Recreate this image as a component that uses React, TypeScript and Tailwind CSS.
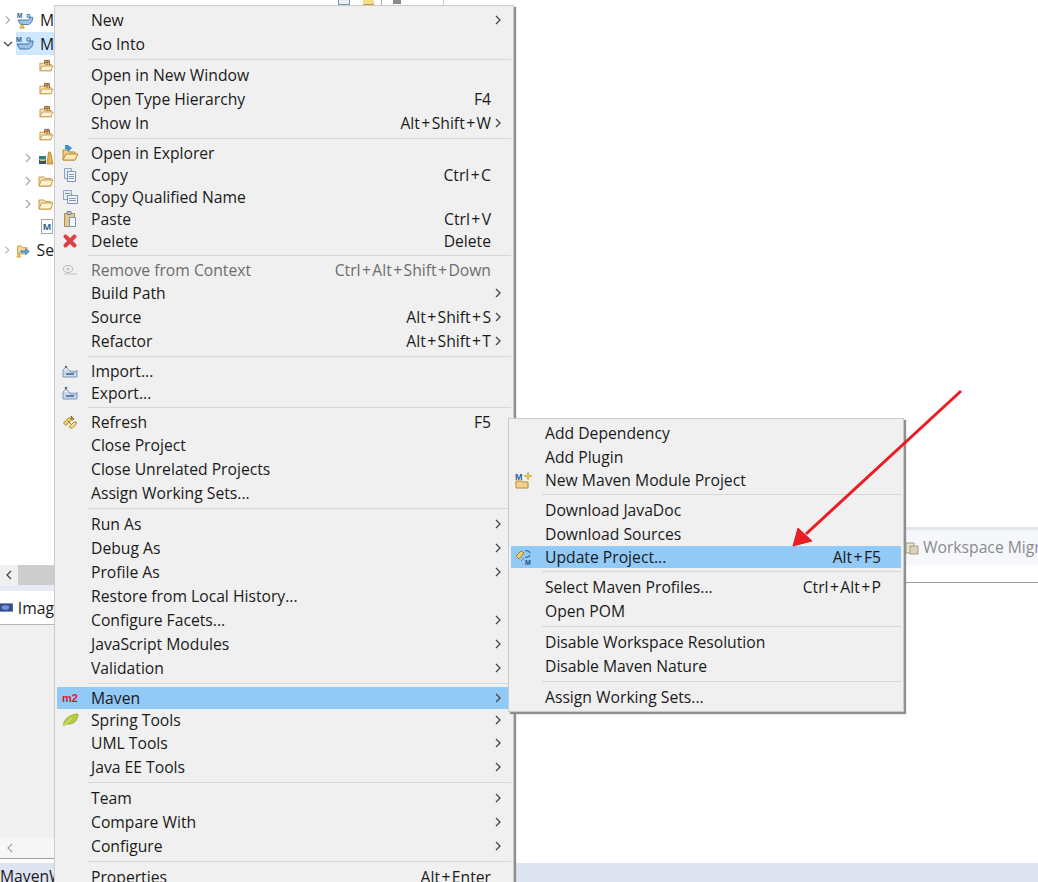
type Row = { label?: string; short?: string; arrow?: boolean; icon?: string; h?: number; sep?: boolean; off?: boolean; on?: boolean };

const mainRows: Row[] = [
  { label: 'New', arrow: true },
  { label: 'Go Into' },
  { sep: true },
  { label: 'Open in New Window' },
  { label: 'Open Type Hierarchy', short: 'F4' },
  { label: 'Show In', short: 'Alt+Shift+W', arrow: true },
  { sep: true },
  { label: 'Open in Explorer', icon: 'explorer', h: 22 },
  { label: 'Copy', short: 'Ctrl+C', icon: 'copy', h: 22 },
  { label: 'Copy Qualified Name', icon: 'copyq', h: 22 },
  { label: 'Paste', short: 'Ctrl+V', icon: 'paste', h: 22 },
  { label: 'Delete', short: 'Delete', icon: 'delete', h: 22 },
  { sep: true },
  { label: 'Remove from Context', short: 'Ctrl+Alt+Shift+Down', icon: 'remove', h: 22, off: true },
  { label: 'Build Path', arrow: true },
  { label: 'Source', short: 'Alt+Shift+S', arrow: true },
  { label: 'Refactor', short: 'Alt+Shift+T', arrow: true },
  { sep: true },
  { label: 'Import...', icon: 'import', h: 22 },
  { label: 'Export...', icon: 'export', h: 22 },
  { sep: true },
  { label: 'Refresh', short: 'F5', icon: 'refresh', h: 22 },
  { label: 'Close Project' },
  { label: 'Close Unrelated Projects' },
  { label: 'Assign Working Sets...' },
  { sep: true },
  { label: 'Run As', arrow: true },
  { label: 'Debug As', arrow: true },
  { label: 'Profile As', arrow: true },
  { label: 'Restore from Local History...' },
  { label: 'Configure Facets...', arrow: true },
  { label: 'JavaScript Modules', arrow: true },
  { label: 'Validation', arrow: true },
  { sep: true },
  { label: 'Maven', arrow: true, icon: 'm2', h: 22, on: true },
  { label: 'Spring Tools', arrow: true, icon: 'leaf', h: 22 },
  { label: 'UML Tools', arrow: true },
  { label: 'Java EE Tools', arrow: true },
  { sep: true },
  { label: 'Team', arrow: true },
  { label: 'Compare With', arrow: true },
  { label: 'Configure', arrow: true },
  { sep: true },
  { label: 'Properties', short: 'Alt+Enter' },
];

const subRows: Row[] = [
  { label: 'Add Dependency' },
  { label: 'Add Plugin' },
  { label: 'New Maven Module Project', icon: 'module', h: 22 },
  { sep: true },
  { label: 'Download JavaDoc' },
  { label: 'Download Sources' },
  { label: 'Update Project...', short: 'Alt+F5', icon: 'update', h: 22, on: true },
  { sep: true },
  { label: 'Select Maven Profiles...', short: 'Ctrl+Alt+P' },
  { label: 'Open POM' },
  { sep: true },
  { label: 'Disable Workspace Resolution' },
  { label: 'Disable Maven Nature' },
  { sep: true },
  { label: 'Assign Working Sets...' },
];

function Folder() {
  return (
    <svg width="16" height="14" viewBox="0 0 16 14">
      <path d="M1 3h5l1 1.5h6V12H1z" fill="#f7e3b5" stroke="#c89a4a" />
      <path d="M1 12l2.5-6H15l-2.5 6z" fill="#fdf3d8" stroke="#c89a4a" />
    </svg>
  );
}

function Pkg() {
  return (
    <svg width="16" height="14" viewBox="0 0 16 14">
      <path d="M1 4h5l1 1.5h6V12H1z" fill="#f7e3b5" stroke="#c89a4a" />
      <path d="M1 12l2.5-5H15l-2.5 5z" fill="#fdf3d8" stroke="#c89a4a" />
      <path d="M6 5V1h5v5M8.5 1v5M6 3h5" fill="#f4d7a0" stroke="#8a5a2b" />
    </svg>
  );
}

function Books() {
  return (
    <svg width="16" height="14" viewBox="0 0 16 14">
      <path d="M1 5h7v3H1z" fill="#2d7f7a" />
      <path d="M1 8.5h7V13H1z" fill="#35566b" />
      <path d="M2 9.5h5" stroke="#d9c36a" />
      <path d="M9 13l1.5-12 2 0L15 13z" fill="#e5b24d" stroke="#a87a24" strokeWidth="0.7" />
    </svg>
  );
}

function Project({ warn }: { warn?: boolean }) {
  return (
    <svg width="18" height="18" viewBox="0 0 18 18">
      <path d="M1 9h10c2 0 3-1 3-3h3c0 5-2 8-6 8H4z" fill="#9cc3e6" stroke="#3f74a8" />
      <path d="M11 3h3v3h-3z" fill="#cfe3f4" stroke="#3f74a8" />
      <text x="0" y="7" fontSize="7" fontWeight="700" fill="#2f5f92" fontFamily="'Liberation Sans', sans-serif">M</text>
      {warn ? <path d="M3 18l2.5-5 2.5 5z" fill="#f3c93c" stroke="#a67d12" strokeWidth="0.6" /> : null}
    </svg>
  );
}

function ServerFolder() {
  return (
    <svg width="18" height="18" viewBox="0 0 18 18">
      <path d="M2 4h5l1 2h6v8H2z" fill="#f5d99a" stroke="#c2933e" />
      <path d="M6 10h6V7l5 4-5 4v-3H6z" fill="#5aa0dc" stroke="#2f6fa8" strokeWidth="0.6" />
      <path d="M1 18l2.5-5 2.5 5z" fill="#f3c93c" stroke="#a67d12" strokeWidth="0.6" />
    </svg>
  );
}

function Chevron({ dark, dir = 'right' }: { dark?: boolean; dir?: 'right' | 'down' | 'left' }) {
  const turn = dir === 'down' ? 'rotate-90' : dir === 'left' ? 'rotate-180' : '';
  return (
    <svg width="8" height="10" viewBox="0 0 8 10" className={turn}>
      <path d="M2 1l4 4-4 4" fill="none" stroke={dark ? '#444444' : '#a8a8a8'} strokeWidth="1.3" />
    </svg>
  );
}

function MenuIcon({ name }: { name?: string }) {
  if (name === 'explorer')
    return (
      <svg width="18" height="18" viewBox="0 0 18 18">
        <path d="M2 6h5l1 2h6v8H2z" fill="#f2cf80" stroke="#b98a36" />
        <path d="M2 16l3-6h12l-3 6z" fill="#fbe8b4" stroke="#b98a36" />
        <path d="M4 1l3 0 4 3 -4 4 0-2-3-1z" fill="#3f8fd8" />
      </svg>
    );
  if (name === 'copy')
    return (
      <svg width="16" height="16" viewBox="0 0 16 16">
        <path d="M2.5 1.5h7v10h-7z" fill="#e6edf5" stroke="#8ea4bd" />
        <path d="M5.5 4.5h8v10h-8z" fill="#f4f7fb" stroke="#7d95b0" />
        <path d="M7 7.5h5M7 9.5h5M7 11.5h5" stroke="#7d95b0" />
      </svg>
    );
  if (name === 'copyq')
    return (
      <svg width="16" height="16" viewBox="0 0 16 16">
        <path d="M1.5 1.5h8v9h-8z" fill="#e6edf5" stroke="#8ea4bd" />
        <path d="M5.5 6.5h10v8h-10z" fill="#f4f7fb" stroke="#7d95b0" />
        <path d="M3 4.5h5M7 9.5h7M7 11.5h7" stroke="#7d95b0" />
      </svg>
    );
  if (name === 'paste')
    return (
      <svg width="16" height="16" viewBox="0 0 16 16">
        <path d="M2.5 2.5h10v13h-10z" fill="#e3c893" stroke="#a98c58" />
        <path d="M5 0.5h4v3H5z" fill="#b9bfc8" stroke="#7f8791" />
        <path d="M7.5 6.5h6v9h-6z" fill="#f4f7fb" stroke="#7d95b0" />
      </svg>
    );
  if (name === 'delete')
    return (
      <svg width="16" height="16" viewBox="0 0 16 16">
        <path d="M3.5 3.5l9 9M12.5 3.5l-9 9" stroke="#dc4146" strokeWidth="4" strokeLinecap="round" />
      </svg>
    );
  if (name === 'remove')
    return (
      <svg width="16" height="14" viewBox="0 0 16 14">
        <ellipse cx="6" cy="6" rx="4.5" ry="3.5" fill="none" stroke="#b8b8b8" />
        <circle cx="6" cy="6" r="1.5" fill="#c4c4c4" />
        <path d="M2 11h13" stroke="#c4c4c4" />
      </svg>
    );
  if (name === 'import' || name === 'export')
    return (
      <svg width="16" height="14" viewBox="0 0 16 14">
        <path d="M1 6v7h14V6" fill="#c9d8ea" stroke="#7b98b9" />
        <path d="M1 6l3-3 5 5h6" fill="none" stroke="#7b98b9" />
        <path d="M4 9h8v2H4z" fill="#5f7fa6" />
        <circle cx="4" cy={name === 'import' ? 3 : 2} r="1.3" fill="#5f6f88" />
      </svg>
    );
  if (name === 'refresh')
    return (
      <svg width="16" height="16" viewBox="0 0 16 16">
        <path d="M1.5 9l5-5 2.5 0 0 2.5-5 5z" fill="#f3cb6a" stroke="#b48a2c" />
        <path d="M7 13l5-5 2.5 0-1 3-3.5 3.5z" fill="#f7dc90" stroke="#b48a2c" />
        <path d="M6 7l3 3M9 2l3 3-2 1z" stroke="#8a6a20" fill="#f3cb6a" />
      </svg>
    );
  if (name === 'm2')
    return (
      <span className="text-[11px] leading-none font-bold text-[#e3122d] font-['Liberation_Sans',sans-serif]">m2</span>
    );
  if (name === 'leaf')
    return (
      <svg width="17" height="14" viewBox="0 0 17 14">
        <path d="M1 13C2 6 8 1 16 1c0 7-5 11-11 10z" fill="#b4cd42" stroke="#8aa52a" strokeWidth="0.7" />
        <path d="M1 13L10 5" stroke="#e3ec9a" />
      </svg>
    );
  if (name === 'module')
    return (
      <svg width="18" height="18" viewBox="0 0 18 18">
        <path d="M1 10h6l1 1h5v6H1z" fill="#f2d28a" stroke="#b98a36" />
        <text x="0" y="9" fontSize="9" fontWeight="700" fill="#2f5f92" fontFamily="'Liberation Sans', sans-serif">M</text>
        <path d="M13 1l1 3 3 1-3 1-1 3-1-3-3-1 3-1z" fill="#f0c94e" stroke="#b4902a" strokeWidth="0.5" />
      </svg>
    );
  if (name === 'update')
    return (
      <svg width="18" height="18" viewBox="0 0 18 18">
        <path d="M1 8l5-5 3 2-5 6z" fill="#f3cb6a" stroke="#8f7026" strokeWidth="0.8" />
        <path d="M6 13l3-3" stroke="#8f7026" />
        <path d="M10 3a4 4 0 0 1 5 2M15 7a4 4 0 0 1-5 2" fill="none" stroke="#2f6fa8" strokeWidth="1.3" />
        <text x="10" y="17" fontSize="7" fontWeight="700" fill="#24507e" fontFamily="'Liberation Sans', sans-serif">M</text>
      </svg>
    );
  return null;
}

// the + in the shortcuts is wider in the original UI font
function Shortcut({ text }: { text: string }) {
  const parts = text.split('+');
  return (
    <span className="whitespace-nowrap pt-0.5">
      {parts.map((p, i) => (
        <span key={i}>
          {i > 0 ? <span className="mx-[1.4px]">+</span> : null}
          {p}
        </span>
      ))}
    </span>
  );
}

function MenuList({ rows }: { rows: Row[] }) {
  return (
    <>
      {rows.map((r, i) =>
        r.sep ? (
          <div key={i} className="h-[7px] flex items-center pl-[33px] pr-0.5">
            <div className="h-px w-full bg-[#d7d7d7]" />
          </div>
        ) : (
          <div
            key={i}
            className={`flex items-center mx-0.5 ${r.h === 22 ? 'h-[22px]' : 'h-6'} ${r.on ? 'bg-[#91c9f7]' : ''} ${r.off ? 'text-[#6d6d6d]' : 'text-[#1a1a1a]'}`}
          >
            <div className="w-[26px] mr-2 shrink-0 flex items-center justify-center">
              <MenuIcon name={r.icon} />
            </div>
            <span className="flex-1 whitespace-nowrap pt-0.5">{r.label}</span>
            {r.short ? <Shortcut text={r.short} /> : null}
            <div className="w-[20px] shrink-0 flex items-center pl-[3px]">
              {r.arrow ? <Chevron dark /> : null}
            </div>
          </div>
        ),
      )}
    </>
  );
}

export default function App() {
  return (
    <div className="relative w-[1038px] h-[882px] overflow-hidden bg-white text-[15.7px] leading-none font-['Open_Sans','Noto_Sans',sans-serif] text-[#1a1a1a]">
      {/* project tree */}
      <div className="absolute left-0 top-[8px] w-[54px]">
        <div className="h-6 flex items-center pl-1 gap-1.5"><Chevron /><Project warn /><span className="pt-0.5">M</span></div>
        <div className="h-[23px] flex items-center pl-1 gap-1.5"><Chevron dark dir="down" /><div className="flex items-center gap-1.5 bg-[#cde8ff] h-full flex-1 -ml-0.5"><Project /><span className="pt-0.5">M</span></div></div>
        <div className="h-[22px] flex items-center pl-[39px]"><Pkg /></div>
        <div className="h-6 flex items-center pl-[39px]"><Pkg /></div>
        <div className="h-[22px] flex items-center pl-[39px]"><Pkg /></div>
        <div className="h-[24px] flex items-center pl-[39px]"><Pkg /></div>
        <div className="h-[22px] flex items-center pl-6 gap-[6px]"><Chevron /><Books /></div>
        <div className="h-6 flex items-center pl-6 gap-[6px]"><Chevron /><Folder /></div>
        <div className="h-[22px] flex items-center pl-6 gap-[6px]"><Chevron /><Folder /></div>
        <div className="h-[23px] flex items-center pl-[41px]">
          <span className="w-3 h-[15px] border border-[#9aa7b5] text-[9px] font-bold text-[#2f5f92] flex items-center justify-center">M</span>
        </div>
        <div className="h-[23px] flex items-center pl-1 gap-1.5"><Chevron /><ServerFolder /><span className="pt-0.5">Se</span></div>
      </div>

      {/* top toolbar fragments */}
      <div className="absolute left-[338px] top-0 flex items-start">
        <span className="w-[12px] h-[5px] border-b border-x border-[#7d95b0] bg-[#e6edf5]" />
        <span className="ml-[13px] w-[11px] h-[5px] border-b border-[#c89a2c] bg-[#f7dc90]" />
        <span className="ml-[7px] w-px h-[5px] bg-[#aaaaaa]" />
        <span className="ml-[11px] w-[8px] h-[4px] bg-[#8a8a8a]" />
        <span className="ml-[42px] w-px h-[5px] bg-[#cccccc]" />
      </div>

      {/* bottom left views */}
      <div className="absolute left-0 top-[565px] w-[54px] h-[20px] bg-[#f0f0f0] flex items-center">
        <div className="w-[18px] flex justify-center"><Chevron dark dir="left" /></div>
        <div className="flex-1 h-full bg-[#cdcdcd]" />
      </div>
      <div className="absolute left-0 top-[585px] w-[54px] h-[40px] bg-[#e6ebf5] border-b border-[#b5b5b5] flex items-end">
        <div className="h-[33px] w-full bg-white flex items-center gap-[5px]">
          <svg width="14" height="11" viewBox="0 0 14 11">
            <path d="M0 1h14v9H0z" fill="#31518f" />
            <ellipse cx="6" cy="5.5" rx="4" ry="2.5" fill="#7f8fd6" />
          </svg>
          <span className="pt-0.5">Imag</span>
        </div>
      </div>
      <div className="absolute left-0 top-[625px] w-[54px] h-[213px] bg-[#f0f0f0]" />
      <div className="absolute left-0 top-[838px] w-[54px] h-[21px] bg-[#f6f6f6] border-b border-[#a0a0a0] flex items-center pl-1.5"><Chevron dir="left" /></div>
      <div className="absolute left-0 top-[863px] right-0 h-[19px] bg-[#dfe4f3] pt-[6px]">MavenW</div>

      {/* right side view */}
      <div className="absolute left-[904px] right-0 top-[527px] h-[38px] border-t-[3px] border-[#e3e6ee] flex items-center bg-[#f5f7fb] text-[#8b8b8b] gap-[4px] pl-px">
        <svg width="14" height="15" viewBox="0 0 14 15" className="shrink-0">
          <path d="M1 3h8v10H1z" fill="#ece4d2" stroke="#a89a7a" />
          <path d="M5 6h8v8H5z" fill="#dcd2bc" stroke="#a89a7a" />
        </svg>
        <span className="whitespace-nowrap">Workspace Migration</span>
      </div>
      <div className="absolute left-[905px] right-0 top-[582px] h-px bg-[#a0a0a0]" />

      {/* context menu */}
      <div className="absolute left-[54px] top-[5px] w-[460px] h-[890px] bg-[#f0f0f0] border border-[#cccccc] pt-0.5 shadow-[2px_2px_1px_#8f8f8f]">
        <MenuList rows={mainRows} />
      </div>

      {/* maven submenu */}
      <div className="absolute left-[508px] top-[418px] w-[396px] h-[294px] bg-[#f0f0f0] border border-[#cccccc] pt-0.5 shadow-[2px_2px_1px_#8f8f8f]">
        <MenuList rows={subRows} />
      </div>

      {/* annotation arrow */}
      <svg className="absolute inset-0 pointer-events-none" width="1038" height="882" viewBox="0 0 1038 882">
        <path d="M961 391L806 534" stroke="#ea1c24" strokeWidth="3" fill="none" />
        <path d="M793 546L798 528 812 541z" fill="#ea1c24" stroke="#ea1c24" strokeWidth="1" />
      </svg>
    </div>
  );
}
